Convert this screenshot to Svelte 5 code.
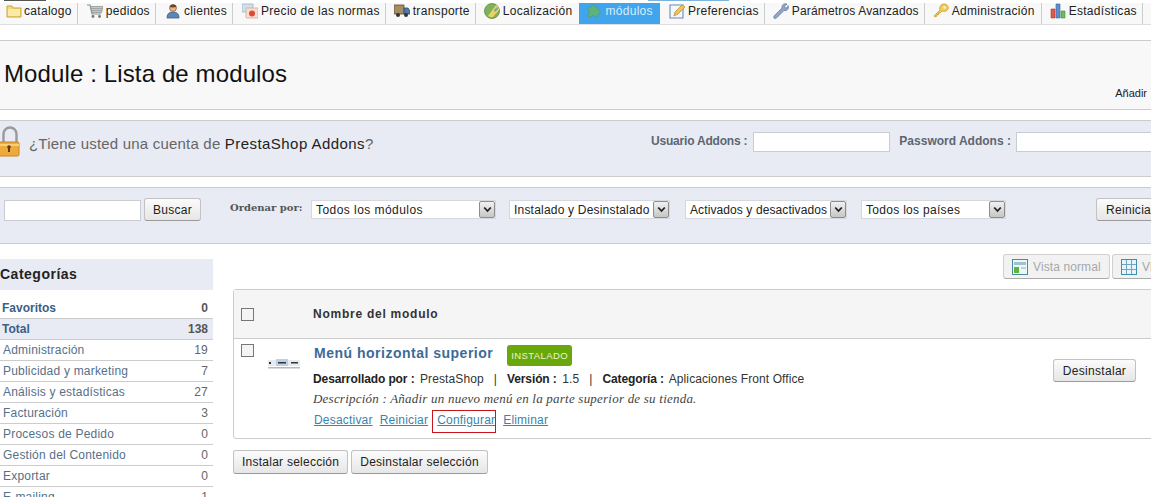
<script lang="ts">
  const tabs = [
    { id: 'folder', label: 'catalogo' },
    { id: 'cart', label: 'pedidos' },
    { id: 'user', label: 'clientes' },
    { id: 'card', label: 'Precio de las normas' },
    { id: 'truck', label: 'transporte' },
    { id: 'globe', label: 'Localización' },
    { id: 'puzzle', label: 'módulos', active: true },
    { id: 'note', label: 'Preferencias' },
    { id: 'wrench', label: 'Parámetros Avanzados' },
    { id: 'key', label: 'Administración' },
    { id: 'chart', label: 'Estadísticas' },
  ];

  const categories = [
    { name: 'Favoritos', count: 0, bold: true },
    { name: 'Total', count: 138, bold: true, current: true },
    { name: 'Administración', count: 19 },
    { name: 'Publicidad y marketing', count: 7 },
    { name: 'Análisis y estadísticas', count: 27 },
    { name: 'Facturación', count: 3 },
    { name: 'Procesos de Pedido', count: 0 },
    { name: 'Gestión del Contenido', count: 0 },
    { name: 'Exportar', count: 0 },
    { name: 'E-mailing', count: 1 },
  ];

  const filters = [
    { label: 'Todos los módulos', cls: 'sel-modules' },
    { label: 'Instalado y Desinstalado', cls: 'sel-installed' },
    { label: 'Activados y desactivados', cls: 'sel-active' },
    { label: 'Todos los países', cls: 'sel-country' },
  ];
</script>

{#snippet tabIcon(id: string)}
  <svg class="tab-icon" viewBox="0 0 16 16" width="16" height="16" aria-hidden="true">
    {#if id === 'folder'}
      <path d="M1 3h5l1 2h8v9H1z" fill="#f5d774" stroke="#c9a545" stroke-width="1" />
      <path d="M2 6h12v7H2z" fill="#fbe9a6" />
    {:else if id === 'cart'}
      <path d="M0 2h3l2 9h9" fill="none" stroke="#8a8f8f" stroke-width="1.2" />
      <path d="M3.5 3.5H16l-1.5 6H5z" fill="#c4c9c9" stroke="#8f9595" stroke-width=".8" />
      <path d="M4 5.500h11M4.500 7.500h10" stroke="#8f9595" stroke-width=".7" />
      <circle cx="6" cy="13.500" r="1.400" fill="#777" /><circle cx="12.500" cy="13.500" r="1.400" fill="#777" />
    {:else if id === 'user'}
      <path d="M2 15c0-5 3-6 6-6s6 1 6 6z" fill="#5c86b5" stroke="#3d6087" stroke-width=".8" />
      <circle cx="8" cy="5" r="3.400" fill="#e9b78c" stroke="#96603a" stroke-width=".8" />
      <path d="M4.600 4c.5-3 6-3.500 6.800 0-2 .5-5 .5-6.800 0z" fill="#6b4327" />
    {:else if id === 'card'}
      <path d="M0 1h11v8H0z" fill="#cfe0ee" stroke="#9db4c6" stroke-width=".8" />
      <path d="M4 5h12v10H4z" fill="#f7dfcf" stroke="#d2ae96" stroke-width=".8" />
      <circle cx="10" cy="10.500" r="3" fill="#e0483a" />
    {:else if id === 'truck'}
      <path d="M0 2h10v9H0z" fill="#a88d62" stroke="#5c4a30" stroke-width=".8" />
      <path d="M10 5h4l2 3v3h-6z" fill="#4e79a8" stroke="#2b4a6e" stroke-width=".8" />
      <circle cx="4" cy="12" r="2" fill="#333" /><circle cx="12" cy="12" r="2" fill="#333" />
    {:else if id === 'globe'}
      <circle cx="8" cy="8" r="7.500" fill="#7fb35a" stroke="#5d8c43" stroke-width=".8" />
      <path d="M4 13 12 2c2 1 3 3 3 5l-6 7c-2 .5-3.500 0-5-1z" fill="#ecd25e" />
      <path d="M10 7l3-3 1 2-3 3z" fill="#6aa3cf" />
    {:else if id === 'puzzle'}
      <path d="M2 4h3c0-3 4-3 4 0h3v3c3 0 3 4 0 4v3H9c0-2-4-2-4 0H2v-3c2 0 2-4 0-4z" fill="#5fb27c" stroke="#4a9a76" stroke-width=".6" />
    {:else if id === 'note'}
      <path d="M1 2h13v13H1z" fill="#f4f7fb" stroke="#6b8cb0" stroke-width="1.100" />
      <path d="M5 13l1-4 7-7 3 2-7 7z" fill="#efc354" stroke="#b68a2c" stroke-width=".7" />
    {:else if id === 'wrench'}
      <path d="M1 13 9 5c-.5-3 2-5 5-4l-2.500 2.500 1 1.500 2-.5 .5-2c1.500 3-1 6-4 5l-8 8c-1 1-3-.5-2-2.500z" fill="#8ea4c9" stroke="#64799e" stroke-width=".7" />
    {:else if id === 'key'}
      <path d="M1 13 7 7c-1-3 1-6 4-6s5 3 4 5-4 3-6 2l-2 2-1.500 0 0 1.500-1.500 0 0 1.500-2 1z" fill="#f1cc58" stroke="#c49a2c" stroke-width=".8" />
      <circle cx="11.500" cy="4.500" r="1.200" fill="#fff6cf" />
    {:else if id === 'chart'}
      <path d="M1 6h4v9H1z" fill="#dd5a4a" stroke="#a93a2f" stroke-width=".6" />
      <path d="M6 1h4v14H6z" fill="#5b8fd0" stroke="#36649e" stroke-width=".6" />
      <path d="M11 8h4v7h-4z" fill="#6dbb5a" stroke="#448a36" stroke-width=".6" />
    {/if}
  </svg>
{/snippet}

{#snippet arrow()}
  <span class="sel-arrow">
    <svg viewBox="0 0 9 7" width="9" height="7" aria-hidden="true">
      <path d="M1.200 1.500 4.500 5 7.800 1.500" fill="none" stroke="#222" stroke-width="1.800" />
    </svg>
  </span>
{/snippet}

<div class="page">
  <div class="top-scraps">
    <i class="scrap-dark"></i>
    <i class="scrap-blue"></i>
  </div>

  <nav class="tabs">
    {#each tabs as tab}
      <div class="tab" class:active={tab.active}>
        {@render tabIcon(tab.id)}
        <span>{tab.label}</span>
      </div>
    {/each}
  </nav>

  <header class="page-head">
    <h1>Module : Lista de modulos</h1>
    <span class="add">Añadir</span>
  </header>

  <section class="addons">
    <svg class="lock" viewBox="0 0 20 32" width="20" height="32" aria-hidden="true">
      <path d="M3.500 17V8a6.500 6.500 0 0 1 13 0v9" fill="none" stroke="#9a9a9a" stroke-width="2.400" />
      <rect x="-2" y="16" width="21" height="14" rx="1.500" fill="#efaa3c" stroke="#c98420" />
      <path d="M-2 18h21v2H-2z" fill="#f7cf7a" />
      <circle cx="9" cy="21" r="1.800" fill="#5b3a10" />
      <path d="M8 21h2v5H8z" fill="#5b3a10" />
    </svg>
    <p class="addons-text">¿Tiene usted una cuenta de <b>PrestaShop Addons</b>?</p>
    <label class="addons-user" for="addons-user">Usuario Addons :</label>
    <input id="addons-user" class="field user-field" type="text" />
    <label class="addons-pass" for="addons-pass">Password Addons :</label>
    <input id="addons-pass" class="field pass-field" type="text" />
  </section>

  <section class="filters">
    <input class="field search" type="text" />
    <button class="btn buscar">Buscar</button>
    <span class="order-label">Ordenar por:</span>
    {#each filters as f}
      <div class="select {f.cls}">
        <span>{f.label}</span>
        {@render arrow()}
      </div>
    {/each}
    <button class="btn reset">Reiniciar</button>
  </section>

  <div class="content">
    <aside class="sidebar">
      <h3>Categorías</h3>
      <ul>
        {#each categories as c}
          <li class:bold={c.bold} class:current={c.current}>
            <a href="#cat">{c.name}</a>
            <span>{c.count}</span>
          </li>
        {/each}
      </ul>
    </aside>

    <main class="main">
      <div class="views">
        <button class="btn view">
          <svg viewBox="0 0 16 16" width="16" height="16" aria-hidden="true">
            <rect x=".5" y=".5" width="15" height="15" fill="#eef6f8" stroke="#4a8ba0" />
            <path d="M2 3h12v3H2z" fill="#9cc3d0" />
            <path d="M2 8h5v6H2z" fill="#5fb43c" />
            <path d="M9 8h5v2H9z" fill="#b8d5de" />
          </svg>
          Vista normal
        </button>
        <button class="btn view">
          <svg viewBox="0 0 16 16" width="16" height="16" aria-hidden="true">
            <rect x=".5" y=".5" width="15" height="15" fill="#e8f4fa" stroke="#3f8fb0" />
            <path d="M1 5.500h14M1 10.500h14M5.500 1v14M10.500 1v14" stroke="#6aa8c4" />
          </svg>
          Vista avanzada
        </button>
      </div>

      <div class="table">
        <div class="table-head">
          <span class="check"></span>
          <strong>Nombre del modulo</strong>
        </div>
        <div class="module">
          <span class="check row-check"></span>
          <svg class="module-icon" viewBox="0 0 32 12" width="32" height="12" aria-hidden="true">
            <path d="M0 3h32v6H0z" fill="#e4ebf3" />
            <path d="M8 2h12v7H8z" fill="#bcd0e6" />
            <path d="M1 5h2v2H1zM10 5h8v1.500h-8zM23 5h7v1.500h-7z" fill="#333" />
            <path d="M0 10h32v1.500H0z" fill="#b9b9b9" />
          </svg>
          <div class="module-body">
            <div class="module-title">
              <a href="#m">Menú horizontal superior</a>
              <span class="badge">INSTALADO</span>
            </div>
            <p class="meta">
              <b>Desarrollado por :</b> PrestaShop<i class="sep">|</i><b>Versión :</b> 1.5<i class="sep">|</i><b>Categoría :</b> Aplicaciones Front Office
            </p>
            <p class="desc">Descripción : Añadir un nuevo menú en la parte superior de su tienda.</p>
            <div class="actions">
              <a href="#a">Desactivar</a>
              <a href="#a">Reiniciar</a>
              <a class="marked" href="#a">Configurar</a>
              <a href="#a">Eliminar</a>
            </div>
          </div>
          <button class="btn uninstall">Desinstalar</button>
        </div>
      </div>

      <div class="bulk">
        <button class="btn">Instalar selección</button>
        <button class="btn">Desinstalar selección</button>
      </div>
    </main>
  </div>
</div>

<style>
  :global(body) { overflow: hidden; height: 497px; background: #fff; }

  .page {
    width: 1151px; height: 497px; overflow: hidden;
    font-family: "Liberation Sans", Arial, sans-serif; font-size: 12px;
    letter-spacing: 0.3px; color: #222;
  }

  .top-scraps { height: 3px; display: flex; }
  .scrap-dark { width: 42px; height: 1px; margin-left: 4px; background: #555; }
  .scrap-blue { width: 81px; height: 1px; margin-left: 602px; background: #7ab5e0; }

  /* tab bar */
  .tabs {
    display: flex; height: 21px; background: #f8f8f8;
    border-bottom: 1px solid #ddd; padding-left: 6px;
  }
  .tab {
    display: flex; align-items: flex-start; gap: 3px;
    height: 21px; padding: 0 5px 0 9px;
    border-right: 1px solid #ccc; color: #222; line-height: 17px;
  }
  .tab:first-child { padding-left: 0; gap: 2px; }
  .tab:nth-child(n+5) { padding-left: 8px; }
  .tab:nth-child(6) { border-right: 0; padding-right: 7px; }
  .tab.active { background: #41a5ee; color: #d6ecfb; border-right: 0; padding: 0 7px; }
  .tab:nth-child(8) { padding-left: 9px; padding-right: 5px; }
  .tab:nth-child(9) { letter-spacing: 0.15px; padding-right: 5px; }
  .tab:nth-child(10) { padding-right: 6px; }
  .tab-icon { flex: none; }

  /* heading */
  .page-head {
    display: flex; justify-content: space-between; align-items: flex-end;
    box-sizing: border-box; height: 70px; margin-top: 15px; padding: 0 4px 9px;
    background: #f8f8f8; border-top: 1px solid #ccc; border-bottom: 1px solid #ccc;
  }
  h1 {
    margin: 0 0 13px; font-size: 24px; font-weight: 400; color: #111;
    letter-spacing: 0.12px; line-height: 26px;
  }
  .add { font-size: 11px; letter-spacing: 0; color: #222; line-height: 14px; }

  /* addons */
  .addons {
    display: flex; align-items: flex-start; box-sizing: border-box;
    height: 57px; margin-top: 10px; padding-top: 5px;
    background: #e8ebf3; border-top: 1px solid #ccc; border-bottom: 1px solid #ccc;
  }
  .lock { flex: none; }
  .addons-text {
    margin: 8px 0 0 9px; width: 622px; flex: none; font-size: 15px; line-height: 20px;
    color: #666; letter-spacing: 0.2px;
  }
  .addons-text b { font-weight: 400; color: #222; letter-spacing: 0.45px; }
  label {
    flex: none; font-weight: 700; color: #5c6672; line-height: 20px; margin-top: 5px;
    letter-spacing: -0.2px;
  }
  .addons-pass { letter-spacing: 0; }
  .field {
    flex: none; box-sizing: border-box; height: 21px; padding: 0; margin: 0;
    background: #fff; border: 1px solid #c9ccd3; border-radius: 0; outline: 0;
  }
  .user-field { width: 137px; height: 20px; margin: 6px 9px 0 6px; }
  .pass-field { width: 200px; height: 20px; margin: 6px 0 0 5px; }

  /* filters */
  .filters {
    display: flex; align-items: flex-start; box-sizing: border-box;
    height: 57px; margin-top: 10px; padding: 10px 0 0 4px;
    background: #e8ebf3; border-top: 1px solid #ccc; border-bottom: 1px solid #ccc;
  }
  .search { width: 137px; margin: 2px 3px 0 0; }
  .btn {
    flex: none; box-sizing: border-box; height: 23px; padding: 0 8px;
    font: 12px "Liberation Sans", Arial, sans-serif; letter-spacing: 0.3px; color: #222;
    background: linear-gradient(#fbfbfb, #e6e6e6); border: 1px solid #c2c2c2;
    border-bottom-color: #9a9a9a; border-radius: 3px;
  }
  .buscar { width: 57px; padding: 0; }
  .order-label {
    flex: none; margin: 3px 8px 0 29px; font-weight: 700; color: #555; width: 73px;
    font-family: "DejaVu Serif", "Liberation Serif", serif; font-size: 10px; letter-spacing: 0;
    line-height: 14px; white-space: nowrap;
  }
  .select {
    flex: none; display: flex; align-items: center; justify-content: space-between;
    box-sizing: border-box; height: 19px; margin-top: 2px; padding: 0 0 0 4px;
    background: #fff; border: 1px solid #d5d8df; overflow: hidden; white-space: nowrap;
  }
  .sel-arrow {
    flex: none; display: flex; align-items: center; justify-content: center;
    width: 16px; height: 17px; box-sizing: border-box;
    background: linear-gradient(#f1f1f1, #c6c6c6); border: 1px solid #8d8d8d; border-radius: 2px;
  }
  .sel-modules { width: 185px; letter-spacing: 0.45px; }
  .sel-installed { width: 161px; margin-left: 13px; letter-spacing: 0.2px; }
  .sel-active { width: 162px; margin-left: 15px; letter-spacing: 0.1px; }
  .sel-country { width: 145px; margin-left: 14px; }
  .reset { margin-left: 90px; width: 80px; padding: 0 0 0 9px; text-align: left; }

  /* content */
  .content { display: flex; align-items: flex-start; }

  .sidebar { flex: none; width: 213px; margin-top: 15px; }
  h3 {
    margin: 0; height: 31px; line-height: 30px; font-size: 14px; font-weight: 700;
    color: #222; background: #e8ebf3; letter-spacing: 0.5px;
  }
  ul { list-style: none; margin: 8px 0 0; padding: 0; letter-spacing: 0.2px; }
  li {
    display: flex; justify-content: space-between; box-sizing: border-box;
    height: 21px; padding: 0 5px 0 3px; line-height: 20px;
    border-bottom: 1px solid #ccc; color: #666;
  }
  li a { color: #567089; text-decoration: none; }
  li.bold { font-weight: 700; padding-left: 2px; letter-spacing: 0; }
  li.bold a { color: #3a6088; }
  li.bold span { color: #555; }
  li.current { background: #e8ebf3; }

  .main { flex: none; width: 925px; margin-left: 20px; }

  .views { display: flex; gap: 2px; padding: 10px 0 0 770px; }
  .view {
    display: flex; align-items: center; gap: 5px; height: 25px; padding: 0 8px;
    color: #a5a8ab; background: #f2f2f2; border-color: #d0d0d0; border-bottom-color: #aaa;
    width: 107px; white-space: nowrap; letter-spacing: 0.1px;
  }
  .view + .view { width: 140px; }

  .table {
    margin-top: 10px; box-sizing: border-box; height: 150px;
    border: 1px solid #ccc; border-radius: 3px;
  }
  .table-head {
    display: flex; align-items: center; box-sizing: border-box; height: 49px;
    padding-left: 7px; background: #f5f5f5; border-bottom: 1px solid #ccc;
  }
  .table-head strong { margin-left: 59px; color: #333; letter-spacing: 0.75px; }
  .check {
    flex: none; box-sizing: border-box; width: 13px; height: 13px;
    background: #f4f4f4; border: 1px solid #777;
  }

  .module { display: flex; align-items: flex-start; padding-left: 7px; }
  .row-check { margin-top: 5px; }
  .module-icon { flex: none; margin: 18px 0 0 14px; }
  .module-body { flex: none; width: 740px; margin-left: 13px; }
  .module-title { display: flex; align-items: flex-start; gap: 14px; height: 21px; margin-top: 6px; padding-left: 1px; }
  .module-title a {
    font-size: 14px; font-weight: 700; color: #3d6a9a; text-decoration: none;
    letter-spacing: 0.5px; line-height: 16px;
  }
  .badge {
    padding: 0 4px; height: 21px; line-height: 21px; font-size: 9.500px; color: #e8f5d0;
    background: #68a80a; border-radius: 3px; letter-spacing: 0.4px;
  }
  .meta { margin: 6px 0 0; line-height: 15px; color: #333; white-space: nowrap; letter-spacing: 0.1px; }
  .meta b { color: #222; letter-spacing: -0.1px; margin-right: 2px; }
  .sep { font-style: normal; margin: 0 10px; }
  .desc {
    margin: 4px 0 0; font-family: "Liberation Serif", serif; font-style: italic;
    font-size: 13px; line-height: 15px; color: #444; letter-spacing: 0.22px;
  }
  .actions { display: flex; gap: 7px; margin-top: 7px; line-height: 15px; padding-left: 1px; letter-spacing: 0.2px; }
  .actions a { color: #3a84ab; }
  .marked {
    box-sizing: border-box; width: 62px; padding: 2px 0 4px 4px; margin: -2px 1px -4px -2px;
    outline: 1px solid #c8141c;
  }

  .uninstall { width: 83px; padding: 0; margin: 20px 0 0 0; }

  .bulk { display: flex; gap: 3px; margin-top: 11px; }
  .bulk .btn { height: 24px; letter-spacing: 0.25px; }
</style>
